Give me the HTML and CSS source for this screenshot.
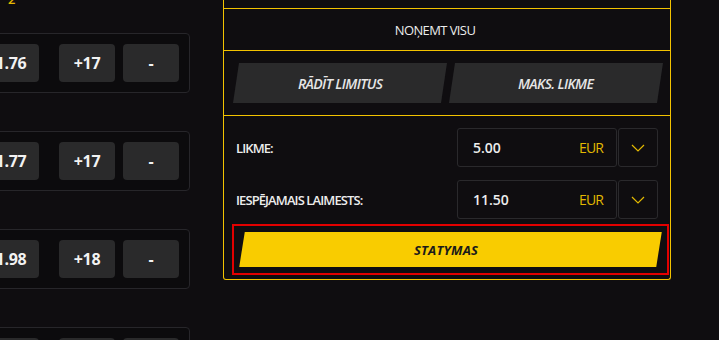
FILE: index.html
```html
<!DOCTYPE html>
<html lang="lv">
<head>
<meta charset="utf-8">
<title>Statymas</title>
<link rel="stylesheet" href="styles.css">
</head>
<body>
<div class="page">
  <div class="markets">
    <div class="cut-label"><span>2</span></div>
    <div class="odds-row">
      <div class="odd odd-main">1.76</div>
      <div class="odd">+17</div>
      <div class="odd">-</div>
    </div>
    <div class="odds-row">
      <div class="odd odd-main">1.77</div>
      <div class="odd">+17</div>
      <div class="odd">-</div>
    </div>
    <div class="odds-row">
      <div class="odd odd-main">1.98</div>
      <div class="odd">+18</div>
      <div class="odd">-</div>
    </div>
    <div class="odds-row">
      <div class="odd odd-main">1.80</div>
      <div class="odd">+17</div>
      <div class="odd">-</div>
    </div>
  </div>

  <div class="slip">
    <div class="slip-top"></div>
    <div class="remove-all">NOŅEMT VISU</div>
    <div class="slip-actions">
      <button class="skew-btn"><span>RĀDĪT LIMITUS</span></button>
      <button class="skew-btn"><span>MAKS. LIKME</span></button>
    </div>
    <div class="stake-box">
      <div class="field-row">
        <span class="field-label">LIKME:</span>
        <div class="field-input"><span class="value">5.00</span><span class="currency">EUR</span></div>
        <div class="field-drop">
          <svg width="14" height="8" viewBox="0 0 14 8"><polyline points="1,1 7,7 13,1" fill="none" stroke="#e3b900" stroke-width="1.2"/></svg>
        </div>
      </div>
      <div class="field-row">
        <span class="field-label">IESPĒJAMAIS LAIMESTS:</span>
        <div class="field-input"><span class="value">11.50</span><span class="currency">EUR</span></div>
        <div class="field-drop">
          <svg width="14" height="8" viewBox="0 0 14 8"><polyline points="1,1 7,7 13,1" fill="none" stroke="#e3b900" stroke-width="1.2"/></svg>
        </div>
      </div>
      <div class="place-wrap">
        <button class="place-btn"><span>STATYMAS</span></button>
      </div>
    </div>
  </div>
</div>
</body>
</html>
```

FILE: styles.css
```css
* { box-sizing: border-box; }

html, body {
  margin: 0;
  padding: 0;
  background: #0f0d10;
  width: 719px;
  height: 340px;
  overflow: hidden;
  font-family: "Open Sans", "Noto Sans", sans-serif;
  color: #e8e8e8;
}

.page {
  display: flex;
  align-items: flex-start;
  height: 340px;
}

/* Left: market odds rows */
.markets {
  width: 190px;
  flex: 0 0 190px;
  height: 340px;
  overflow: hidden;
  display: flex;
  flex-direction: column;
  align-items: flex-end;
}

.cut-label {
  flex: 0 0 33px;
  align-self: stretch;
  height: 33px;
  padding-left: 8px;
  color: #e3b900;
  font-size: 13px;
  line-height: 14px;
  font-weight: 600;
}

.cut-label span {
  display: block;
  margin-top: -8px;
}

.odds-row {
  flex: 0 0 60px;
  width: 250px;
  height: 60px;
  display: flex;
  justify-content: flex-end;
  gap: 8px;
  padding: 10px 10px 10px 0;
  border: 1px solid #27262a;
  border-radius: 4px;
  background: #0c0b0d;
  margin-bottom: 38px;
}

.odd {
  width: 56px;
  height: 38px;
  border-radius: 4px;
  background: #2a2a2b;
  color: #f2f2f2;
  font-size: 16px;
  font-weight: 700;
  display: flex;
  align-items: center;
  justify-content: center;
  letter-spacing: -0.3px;
}

.odd-main {
  margin-right: 12px;
}

/* Right: bet slip */
.slip {
  margin-left: 33px;
  width: 448px;
  flex: 0 0 448px;
  border-left: 1px solid #f2c200;
  border-right: 1px solid #f2c200;
  border-bottom: 1px solid #f2c200;
  border-radius: 0 0 3px 3px;
  display: flex;
  flex-direction: column;
}

.slip-top {
  height: 9px;
  border-bottom: 1px solid #f2c200;
}

.remove-all {
  height: 42px;
  border-bottom: 1px solid #f2c200;
  display: flex;
  align-items: center;
  justify-content: center;
  padding: 0 24px 0 0;
  font-size: 13px;
  font-weight: 500;
  letter-spacing: -0.6px;
  color: #ececec;
}

.slip-actions {
  height: 65px;
  border-bottom: 1px solid #f2c200;
  display: flex;
  gap: 8px;
  padding: 12px 11px 12px 12px;
}

.skew-btn {
  flex: 1 1 0;
  height: 40px;
  border: none;
  background: #2a2a2b;
  transform: skewX(-8.5deg);
  padding: 0;
  display: flex;
  align-items: center;
  justify-content: center;
  font-family: inherit;
  cursor: pointer;
}

.skew-btn span {
  transform: skewX(8.5deg);
  font-size: 14px;
  font-weight: 600;
  font-style: italic;
  letter-spacing: -0.6px;
  color: #e6e6e6;
}

.stake-box {
  padding: 12px 12px 4px 12px;
  display: flex;
  flex-direction: column;
}

.field-row {
  display: flex;
  align-items: center;
  height: 39px;
}

.field-row + .field-row {
  margin-top: 13px;
}

.field-label {
  flex: 1 1 auto;
  font-size: 13px;
  font-weight: 600;
  letter-spacing: -0.9px;
  color: #ececec;
}

.field-input {
  width: 160px;
  height: 39px;
  border: 1px solid #2a292c;
  border-radius: 3px;
  display: flex;
  align-items: center;
  justify-content: space-between;
  padding: 0 13px 0 15px;
}

.value {
  font-size: 14px;
  font-weight: 600;
  color: #ededed;
}

.currency {
  font-size: 14px;
  font-weight: 500;
  letter-spacing: -0.9px;
  color: #e3b900;
}

.field-drop {
  width: 40px;
  height: 39px;
  margin-left: 1px;
  border: 1px solid #2a292c;
  border-radius: 3px;
  display: flex;
  align-items: center;
  justify-content: center;
}

.field-drop svg {
  display: block;
}

.place-wrap {
  margin: 5px -11px 0 -4px;
  height: 51px;
  border: 2px solid #e30000;
  padding: 6px 8px;
}

.place-btn {
  width: 100%;
  height: 35px;
  border: none;
  background: #f9cc00;
  transform: skewX(-9deg);
  padding: 0 8px 0 0;
  display: flex;
  align-items: center;
  justify-content: center;
  font-family: inherit;
  cursor: pointer;
}

.place-btn span {
  transform: skewX(9deg);
  font-size: 13px;
  font-weight: 700;
  font-style: italic;
  letter-spacing: 0.2px;
  color: #1a1a1a;
}
```
